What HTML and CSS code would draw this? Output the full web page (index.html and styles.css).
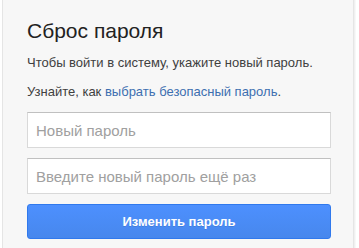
FILE: index.html
```
<!DOCTYPE html>
<html lang="ru">
<head>
<meta charset="utf-8">
<link rel="stylesheet" href="styles.css">
</head>
<body>
<div class="card">
  <h1 class="title">Сброс пароля</h1>
  <p class="text">Чтобы войти в систему, укажите новый пароль.</p>
  <p class="text">Узнайте, как <a class="link" href="#">выбрать безопасный пароль</a>.</p>
  <form class="form">
    <input class="field" type="password" placeholder="Новый пароль">
    <input class="field" type="password" placeholder="Введите новый пароль ещё раз">
    <button class="btn" type="button">Изменить пароль</button>
  </form>
</div>
</body>
</html>
```
FILE: styles.css
```
html, body {
  margin: 0;
  padding: 0;
  background: #fff;
  font-family: "Liberation Sans", Arial, sans-serif;
  overflow: hidden;
}
.card {
  margin-left: 2px;
  width: 326px;
  height: 250px;
  margin-top: -12px;
  padding: 30px 0 0 24px;
  background: #f7f7f7;
  border: 1px solid #e5e5e5;
  box-shadow: 1px 0 0 #f0f0f0, 2px 0 0 #f8f8f8;
}
.title {
  margin: 0 0 11px;
  font-size: 21px;
  font-weight: normal;
  line-height: 24px;
  color: #222;
}
.text {
  margin: 0 0 12px;
  font-size: 13px;
  line-height: 17px;
  color: #404040;
}
.link {
  color: #3d6fb0;
  text-decoration: none;
}
.form {
  display: flex;
  flex-direction: column;
  gap: 10px;
  margin-top: 12px;
  width: 304px;
}
.field {
  box-sizing: border-box;
  height: 36px;
  margin: 0;
  padding: 0 8px;
  border: 1px solid #d9d9d9;
  border-top-color: #c0c0c0;
  background: #fff;
  font-family: "Liberation Sans", Arial, sans-serif;
  font-size: 15px;
  color: #333;
  outline: none;
}
.field::placeholder {
  color: #a0a0a0;
}
.btn {
  box-sizing: border-box;
  height: 35px;
  margin: 0;
  border: 1px solid #3079ed;
  border-radius: 3px;
  background: linear-gradient(#4d90fe, #4787ed);
  color: #fff;
  font-family: "Liberation Sans", Arial, sans-serif;
  font-size: 13px;
  font-weight: bold;
  text-shadow: 0 1px rgba(0,0,0,0.1);
}
```
